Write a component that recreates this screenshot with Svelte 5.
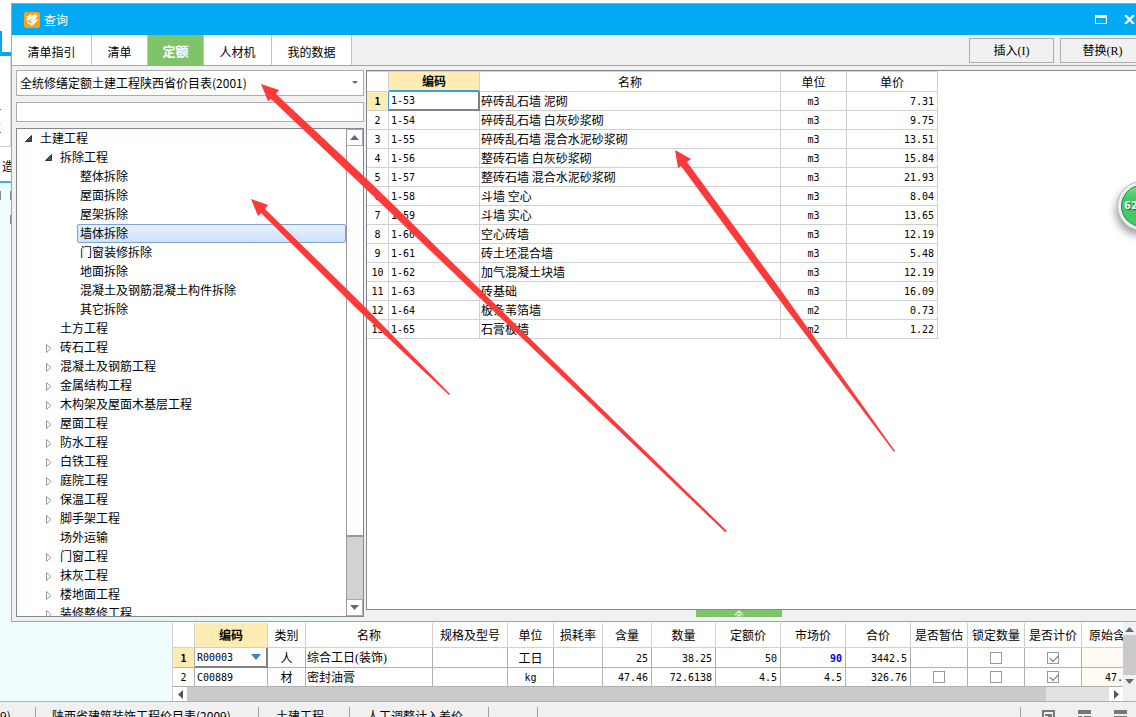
<script>
  const tabs = ['清单指引', '清单', '定额', '人材机', '我的数据'];
  let active = $state(2);
  let selected = $state('墙体拆除');

  // [depth, marker, label] where marker is o(pen), c(losed) or empty for a leaf
  const tree = [
    [0, 'o', '土建工程'],
    [1, 'o', '拆除工程'],
    [2, '', '整体拆除'],
    [2, '', '屋面拆除'],
    [2, '', '屋架拆除'],
    [2, '', '墙体拆除'],
    [2, '', '门窗装修拆除'],
    [2, '', '地面拆除'],
    [2, '', '混凝土及钢筋混凝土构件拆除'],
    [2, '', '其它拆除'],
    [1, '', '土方工程'],
    [1, 'c', '砖石工程'],
    [1, 'c', '混凝土及钢筋工程'],
    [1, 'c', '金属结构工程'],
    [1, 'c', '木构架及屋面木基层工程'],
    [1, 'c', '屋面工程'],
    [1, 'c', '防水工程'],
    [1, 'c', '白铁工程'],
    [1, 'c', '庭院工程'],
    [1, 'c', '保温工程'],
    [1, 'c', '脚手架工程'],
    [1, '', '场外运输'],
    [1, 'c', '门窗工程'],
    [1, 'c', '抹灰工程'],
    [1, 'c', '楼地面工程'],
    [1, 'c', '装修整修工程'],
  ];

  const items = [
    ['1-53', '碎砖乱石墙 泥砌', 'm3', '7.31'],
    ['1-54', '碎砖乱石墙 白灰砂浆砌', 'm3', '9.75'],
    ['1-55', '碎砖乱石墙 混合水泥砂浆砌', 'm3', '13.51'],
    ['1-56', '整砖石墙 白灰砂浆砌', 'm3', '15.84'],
    ['1-57', '整砖石墙 混合水泥砂浆砌', 'm3', '21.93'],
    ['1-58', '斗墙 空心', 'm3', '8.04'],
    ['1-59', '斗墙 实心', 'm3', '13.65'],
    ['1-60', '空心砖墙', 'm3', '12.19'],
    ['1-61', '砖土坯混合墙', 'm3', '5.48'],
    ['1-62', '加气混凝土块墙', 'm3', '12.19'],
    ['1-63', '砖基础', 'm3', '16.09'],
    ['1-64', '板条苇箔墙', 'm2', '0.73'],
    ['1-65', '石膏板墙', 'm2', '1.22'],
  ];

  const cols = ['', '编码', '类别', '名称', '规格及型号', '单位', '损耗率', '含量', '数量', '定额价', '市场价', '合价', '是否暂估', '锁定数量', '是否计价', '原始含量'];
  const widths = [22, 73, 38, 127, 75, 46, 49, 49, 64, 65, 65, 65, 57, 57, 57, 63];
</script>

<div class="app">
  <div class="upper">
    <div class="behind">
      <div class="behind-top"><i></i></div>
      <div class="behind-mid"><b></b><b class="light"></b><b></b></div>
      <div class="behind-tab">造</div>
      <div class="behind-low"><i></i><i class="twin"></i></div>
    </div>

    <section class="dialog">
      <header>
        <svg width="16" height="16" viewBox="0 0 16 16" aria-hidden="true">
          <rect width="16" height="16" rx="2" fill="#f9a11b" />
          <path d="M2 5L7 2l1 1-3 3 6-4 3 2-6 6-2-1 4-4-6 4-2-1 3-4-2 2z" fill="#fff" />
          <path d="M4 10l3 1 5-4 2 1-6 6-5-3z" fill="#fff" />
        </svg>
        <h1>查询</h1>
        <button class="win" aria-label="最大化">
          <svg width="12" height="9"><path d="M0 0h12v9H0zM1 3v5h10V3z" fill="#fff" fill-rule="evenodd" /></svg>
        </button>
        <button class="win" aria-label="关闭">
          <svg width="11" height="9"><path d="M1 0l9 9M10 0L1 9" stroke="#fff" stroke-width="2.4" /></svg>
        </button>
      </header>

      <nav>
        {#each tabs as t, i}
          <button class="tab t{t.length}" class:active={active === i} onclick={() => (active = i)}>{t}</button>
        {/each}
        <span class="grow"></span>
        <button class="act">插入<span class="serif"> (I)</span></button>
        <button class="act">替换<span class="serif"> (R)</span></button>
      </nav>

      <div class="body">
        <div class="side">
          <div class="combo">
            <select aria-label="定额库"><option>全统修缮定额土建工程陕西省价目表(2001)</option></select>
            <svg width="6" height="4"><path d="M0 0h6L3 3z" fill="#666" /></svg>
          </div>
          <input class="search" aria-label="搜索" />
          <div class="tree">
            <ul>
              {#each tree as [d, m, label]}
                <li class="d{d}">
                  <span class="mark">
                    {#if m === 'o'}
                      <svg width="7" height="7"><path d="M6.5 0.5v6h-6z" fill="#555" stroke="#333" /></svg>
                    {:else if m === 'c'}
                      <svg class="shut" width="6" height="9"><path d="M0.5 0.5v8l4.500-4z" fill="#fff" stroke="#999" /></svg>
                    {/if}
                  </span>
                  <button class:sel={selected === label} onclick={() => (selected = label)}>{label}</button>
                </li>
              {/each}
            </ul>
            <div class="vbar">
              <span class="arrow"><svg width="9" height="5"><path d="M0 5h9L4.500 0z" fill="#667" /></svg></span>
              <span class="thumb"></span>
              <span class="track"></span>
              <span class="arrow"><svg width="9" height="5"><path d="M0 0h9L4.500 5z" fill="#667" /></svg></span>
            </div>
          </div>
        </div>

        <div class="main">
          <div class="pane">
            <table class="list">
              <colgroup><col class="w22" /><col class="w91" /><col class="w301" /><col class="w66" /><col class="w91" /></colgroup>
              <thead>
                <tr><th></th><th class="hot">编码</th><th>名称</th><th>单位</th><th>单价</th></tr>
              </thead>
              <tbody>
                {#each items as [code, name, unit, price], i}
                  <tr class:cur={i === 0}>
                    <td class="no">{i + 1}</td>
                    <td class="code mono">{code}</td>
                    <td>{name}</td>
                    <td class="mid mono">{unit}</td>
                    <td class="num">{price}</td>
                  </tr>
                {/each}
              </tbody>
            </table>
          </div>
          <button class="handle" aria-label="展开">
            <svg width="10" height="7"><path d="M1 5l4-4 4 4M3 6.500l2-2 2 2" fill="none" stroke="#d8f0d0" stroke-width="1.500" /></svg>
          </button>
        </div>
      </div>
    </section>
  </div>

  <div class="lower">
    <div class="detail">
      <div class="clip">
        <div class="view">
          <table class="costs">
            <colgroup>{#each widths as w}<col style="width:{w}px" />{/each}</colgroup>
            <thead><tr>{#each cols as c, i}<th class:hot={i === 1}>{c}</th>{/each}</tr></thead>
            <tbody>
              <tr class="cur">
                <td class="no">1</td>
                <td class="code"><div class="pick"><span class="mono">R00003</span><svg width="10" height="6"><path d="M0 0h10L5 6z" fill="#3a87c4" /></svg></div></td>
                <td class="mid">人</td>
                <td>综合工日<span class="serif"> (</span>装饰<span class="serif">)</span></td>
                <td></td>
                <td class="mid">工日</td>
                <td></td>
                <td class="num">25</td>
                <td class="num">38.25</td>
                <td class="num">50</td>
                <td class="num price">90</td>
                <td class="num">3442.5</td>
                <td></td>
                <td class="mid"><input type="checkbox" aria-label="锁定数量" /></td>
                <td class="mid"><input type="checkbox" aria-label="是否计价" checked /></td>
                <td class="tint"></td>
              </tr>
              <tr>
                <td class="no">2</td>
                <td class="code mono">C00889</td>
                <td class="mid">材</td>
                <td>密封油膏</td>
                <td></td>
                <td class="mid mono">kg</td>
                <td></td>
                <td class="num">47.46</td>
                <td class="num">72.6138</td>
                <td class="num">4.5</td>
                <td class="num">4.5</td>
                <td class="num">326.76</td>
                <td class="mid"><input type="checkbox" aria-label="是否暂估" /></td>
                <td class="mid"><input type="checkbox" aria-label="锁定数量" /></td>
                <td class="mid"><input type="checkbox" aria-label="是否计价" checked /></td>
                <td class="tint num left">47.46</td>
              </tr>
            </tbody>
          </table>
        </div>
        <div class="vs">
          <span><svg width="9" height="5"><path d="M0 5h9L4.500 0z" fill="#667" /></svg></span>
          <i></i>
          <span><svg width="9" height="5"><path d="M0 0h9L4.500 5z" fill="#667" /></svg></span>
        </div>
      </div>
      <div class="hs">
        <span><svg width="5" height="9"><path d="M5 0v9L0 4.500z" fill="#556" /></svg></span>
        <i></i>
        <em></em>
        <span><svg width="5" height="9"><path d="M0 0v9l5-4.500z" fill="#556" /></svg></span>
        <b></b>
      </div>
    </div>
  </div>

  <footer>
    <span class="s1">9)</span>
    <span class="s2">陕西省建筑装饰工程价目表(2009)</span>
    <span class="s3">土建工程</span>
    <span class="s4">人工调整计入差价</span>
    <span class="s5"></span>
    <span class="grow"></span>
    <div class="icons">
      <svg width="13" height="13"><path d="M1 13V1h11v12M3 5h4v3H4v5M9 4v9" fill="none" stroke="#777" stroke-width="2" /></svg>
      <svg width="13" height="13"><path d="M0 0h13v4H0zM0 6h4v3H0zM6 6h7v3H6zM0 11h4v2H0zM6 11h7v2H6z" fill="#777" /></svg>
      <svg width="13" height="13"><path d="M0 0h13v4H0zM0 6h13v4H0zM0 12h13v1H0z" fill="#777" /></svg>
    </div>
  </footer>

  <div class="badge">62</div>

  <svg class="notes" width="1136" height="717" aria-hidden="true">
    <g fill="#fc3a3a">
      <path d="M261 84L279 90L276 94L370 182L727 531L725 532L369 192L271 99L268 101Z" />
      <path d="M251 199L268 205L265 209L360 302L450 394L449 395L356 308L261 213L258 216Z" />
      <path d="M675 150L691 159L687 162L780 289L895 451L894 452L775 294L681 166L678 168Z" />
    </g>
  </svg>
</div>

<style>
  :global(body) { background: #fff; }
  * { box-sizing: border-box; }
  .app {
    position: relative;
    display: flex;
    flex-direction: column;
    height: 100vh;
    overflow: hidden;
    font: 12px/18px "Noto Sans CJK SC", sans-serif;
    color: #000;
  }
  button, input, select { font: inherit; color: inherit; margin: 0; padding: 0; border: 0; background: none; }
  svg { display: block; flex: none; }
  .grow { flex: 1; }
  .serif { font-family: "Liberation Serif", serif; }
  .mono, .num, .no { font-family: "DejaVu Sans Mono", monospace; font-size: 10px; }

  .upper { display: flex; flex: 1; min-height: 0; }
  .behind { flex: none; width: 11px; display: flex; flex-direction: column; overflow: hidden; }
  .behind-top { height: 56px; padding-top: 31px; border-bottom: 4px solid #00a8f0; }
  .behind-top i { display: block; width: 2px; height: 21px; background: #00a8f0; }
  .behind-mid { height: 91px; padding-top: 53px; border-bottom: 1px solid #ccc; border-right: 1px solid #ddd; }
  .behind-mid b { display: block; width: 1px; height: 1px; margin-bottom: 14px; background: #3479c0; }
  .behind-mid b.light { background: #9bdcf8; margin-bottom: 7px; }
  .behind-tab { height: 36px; padding: 10px 0 0 2px; border-bottom: 2px solid #3eb0e8; white-space: nowrap; }
  .behind-low { flex: 1; display: flex; justify-content: space-between; padding-top: 8px; background: #effdff; }
  .behind-low i { width: 1px; height: 9px; background: #888; }
  .behind-low i.twin { height: 33px; background: linear-gradient(#888 9px, transparent 9px 24px, #888 24px); }

  .dialog {
    flex: 1;
    min-width: 0;
    display: flex;
    flex-direction: column;
    margin-top: 3px;
    border: 1px solid #a0a4a6;
    border-right: 0;
    background: #f1f1f1;
    overflow: hidden;
  }
  header { flex: none; display: flex; align-items: center; height: 31px; padding-left: 12px; background: #03a9f2; color: #fff; }
  h1 { flex: 1; margin: 0 0 0 4px; font-size: 12px; font-weight: 400; line-height: 18px; }
  .win { margin-left: 17px; }
  .win:last-child { margin-right: 1px; }

  nav { flex: none; display: flex; align-items: stretch; height: 31px; border-bottom: 1px solid #80c46a; overflow: hidden; }
  .tab { flex: none; width: 68px; padding-top: 3px; background: #fff; border-right: 1px solid #a9dc9a; }
  .t4 { width: 80px; }
  .t2 { width: 56px; }
  .tab.active { padding-top: 2px; background: #80c46a; color: #fff; font-weight: 700; font-size: 13px; }
  .act { flex: none; width: 85px; height: 25px; margin: 3px 6px 0 0; border: 1px solid #adadad; }
  .act:last-child { margin-right: -9px; }

  .body { flex: 1; min-height: 0; display: flex; }
  .side { flex: none; width: 352px; display: flex; flex-direction: column; padding: 4px 0 4px 4px; }
  .combo { flex: none; display: flex; align-items: center; height: 26px; padding-right: 5px; border: 1px solid #adadad; background: #fff; }
  .combo select { flex: 1; height: 24px; padding-left: 3px; appearance: none; outline: 0; }
  .search { flex: none; height: 20px; margin: 6px 0; border: 1px solid #adadad; background: #fff; outline: 0; }
  .tree { flex: 1; min-height: 0; display: flex; border: 1px solid #828790; background: #fff; overflow: hidden; }
  ul { flex: 1; margin: 0; padding: 0; list-style: none; overflow: hidden; }
  li { display: flex; height: 19px; }
  .mark { flex: none; display: flex; align-items: center; width: 13px; }
  .shut { margin: 2px 0 0 1px; }
  .d0 { padding-left: 8px; }
  .d1 { padding-left: 28px; }
  .d2 { padding-left: 47px; }
  li button { flex: 1; padding: 0 2px 2px; line-height: 15px; text-align: left; border: 1px solid transparent; border-radius: 2px; white-space: nowrap; }
  .d0 button, .d1 button { flex: none; padding-left: 1px; }
  .sel { border-color: #7da2ce; background: linear-gradient(#e6f1fd, #cde2fc); }
  .vbar { flex: none; width: 17px; display: flex; flex-direction: column; border-left: 1px solid #9a9a9a; background: #d2d2d2; }
  .arrow { flex: none; display: grid; place-items: center; height: 17px; background: #fff; border: 1px solid #aaa; border-left: 0; }
  .thumb { flex: 392; background: #fff; border-bottom: 2px solid #9a9a9a; }
  .track { flex: 62; }

  .main { flex: 1; min-width: 0; display: flex; flex-direction: column; margin-left: 2px; }
  .pane { flex: 1; min-height: 0; margin-top: 4px; background: #fff; border: 1px solid #828790; border-right: 0; overflow: hidden; }
  .handle { flex: none; display: grid; place-items: center; align-self: center; width: 86px; height: 7px; margin: 0 24px 4px 0; background: #80c46a; }

  table { border-collapse: separate; border-spacing: 0; table-layout: fixed; }
  th { padding: 0; font-weight: 400; }
  td { padding: 0 1px; white-space: nowrap; overflow: hidden; }
  th, td { border-right: 1px solid #d0d0d0; border-bottom: 1px solid #d0d0d0; }
  .hot { background: #ffecb3; font-weight: 700; }
  .no { text-align: center; padding: 0; }
  .mid { text-align: center; }
  .num { text-align: right; padding-right: 3px; }
  .cur .no { background: #ffecb3; font-weight: 700; }
  .code { padding-left: 2px; }

  .list { width: 571px; }
  .w22 { width: 22px; }
  .w91 { width: 91px; }
  .w301 { width: 301px; }
  .w66 { width: 66px; }
  .list th { height: 21px; border-top: 1px solid #d0d0d0; }
  .list td, .costs td { height: 19px; line-height: 18px; }
  td.mono, td.num, td.no { padding-top: 2px; line-height: 16px; }
  .list .hot { border-bottom: 2px solid #35a3d8; }
  .list .cur .no { border-right: 1px solid #35a3d8; }
  .cur .code { padding-top: 1px; border-right: 2px solid #808080; border-bottom: 2px solid #808080; }

  .lower { flex: none; display: flex; padding-left: 172px; padding-top: 1px; background: #effdff; }
  .detail { flex: 1; min-width: 0; background: #fff; border-left: 1px solid #d0d0d0; }
  .clip { display: flex; }
  .view { flex: 1; min-width: 0; overflow: hidden; }
  .costs { width: 972px; }
  .costs th { height: 25px; white-space: nowrap; }
  .costs td { border-color: #b0b0b0; }
  .costs .cur .code { padding-top: 0; border-color: #808080; }
  .pick { display: flex; align-items: center; justify-content: space-between; height: 17px; line-height: 17px; padding-right: 4px; }
  .price { color: #00e; font-weight: 700; }
  .tint { background: #fffaf4; }
  .left { text-align: left; padding-left: 23px; }
  .costs input { appearance: none; display: block; width: 12px; height: 12px; margin: 0 auto; border: 1px solid #999; background: #fff; }
  .costs input:checked::after { content: ""; display: block; width: 7px; height: 4px; margin: 2px 0 0 2px; border: solid #666; border-width: 0 0 1px 1px; transform: rotate(-45deg); }
  .vs { flex: none; width: 13px; display: flex; flex-direction: column; background: #f0f0f0; }
  .vs span { display: grid; place-items: center; height: 12px; }
  .vs i { flex: 1; background: #cacaca; }
  .hs { display: flex; height: 14px; background: #e2e2e2; }
  .hs span { display: grid; place-items: center; width: 14px; background: #fff; }
  .hs i { flex: 859; background: #cacaca; }
  .hs em { flex: 63; }
  .hs b { width: 13px; background: #f0f0f0; }

  footer { flex: none; display: flex; height: 16px; padding-top: 5px; border-top: 1px solid #b0b0b0; background: #f0f0f0; overflow: hidden; white-space: nowrap; }
  footer > span:not(.grow) { flex: none; height: 18px; border-right: 1px solid #9aa3b0; }
  .s1 { width: 36px; }
  .s2 { width: 223px; padding-left: 16px; }
  .s3 { width: 91px; padding-left: 17px; }
  .s4 { width: 139px; padding-left: 17px; }
  .s5 { width: 49px; }
  .icons { display: flex; gap: 23px; height: 18px; padding: 3px 9px 0 21px; border-left: 1px solid #9aa3b0; }

  .badge {
    position: absolute;
    top: 182px;
    right: -30px;
    width: 48px;
    height: 48px;
    padding-left: 3px;
    border: 3px solid #eee;
    border-radius: 50%;
    outline: 1px solid #bbb;
    background: linear-gradient(#8ae09a, #45c965 30%, #45c965);
    box-shadow: inset 0 0 0 1px #178a50, -2px 5px 8px #999;
    color: #fff;
    font: 700 10px/42px "DejaVu Sans", sans-serif;
    text-shadow: 1px 1px 1px #186830;
  }
  .notes { position: absolute; top: 0; left: 0; pointer-events: none; }
</style>
